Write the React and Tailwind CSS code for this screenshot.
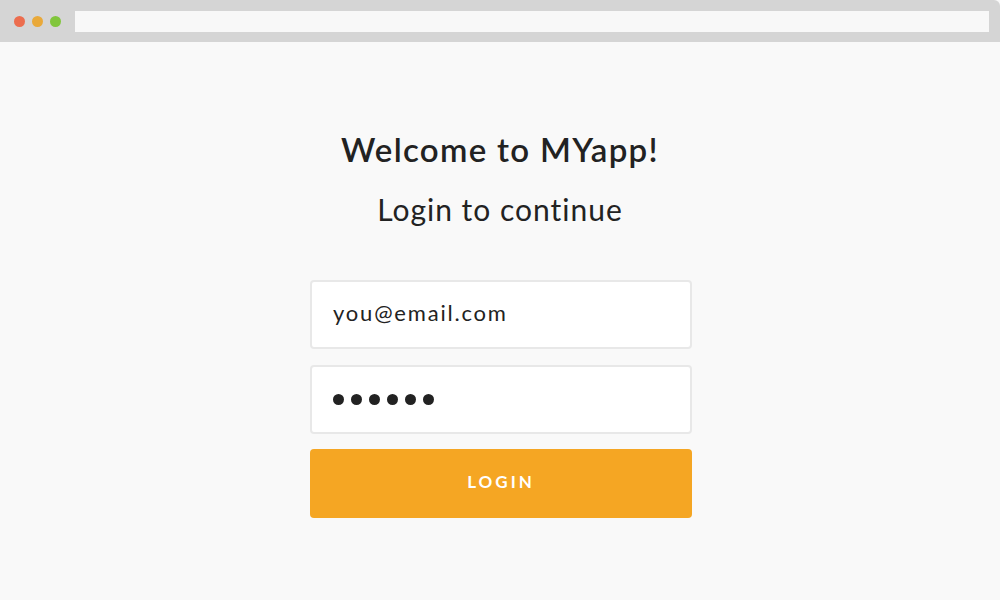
import React from 'react';

const App = () => {
  return (
    <div className="w-[1000px] h-[600px] flex flex-col bg-[#f9f9f9] overflow-hidden" style={{ fontFamily: 'Lato, "Open Sans", sans-serif' }}>
      {/* Tarayıcı çubuğu */}
      <div className="h-[42px] shrink-0 bg-[#d5d5d5] rounded-tr-[6px] flex items-center pl-[14px] pr-[11px]">
        <div className="flex items-center gap-[7px]">
          <span className="w-[11px] h-[11px] rounded-full bg-[#ec6d4e]" />
          <span className="w-[11px] h-[11px] rounded-full bg-[#e9a93a]" />
          <span className="w-[11px] h-[11px] rounded-full bg-[#81c63c]" />
        </div>
        <div className="ml-[14px] flex-1 h-[21px] bg-[#f8f8f8]" />
      </div>

      {/* Giriş formu */}
      <div className="flex-1 flex flex-col items-center pt-[87px]">
        <h1 className="text-[33px] leading-[40px] font-semibold text-[#222] tracking-[1.3px]">Welcome to MYapp!</h1>
        <p className="mt-[22px] text-[30px] leading-[36px] text-[#222] tracking-[1px]">Login to continue</p>

        <div className="mt-[53px] ml-[2px] w-[382px] flex flex-col">
          <div className="h-[69px] bg-white border-2 border-[#e8e8e8] rounded-[4px] flex items-center px-[21px] pb-[4px]">
            <span className="text-[22px] text-[#222] tracking-[1.8px]">you@email.com</span>
          </div>
          <div className="mt-[16px] h-[69px] bg-white border-2 border-[#e8e8e8] rounded-[4px] flex items-center px-[21px] gap-[7px]">
            {[0, 1, 2, 3, 4, 5].map((i) => (
              <span key={i} className="w-[11px] h-[11px] rounded-full bg-[#222]" />
            ))}
          </div>
          <button className="mt-[15px] h-[69px] bg-[#f5a623] rounded-[4px] text-white text-[17px] font-bold tracking-[3px] pb-[3px]">
            LOGIN
          </button>
        </div>
      </div>
    </div>
  );
};

export default App;
